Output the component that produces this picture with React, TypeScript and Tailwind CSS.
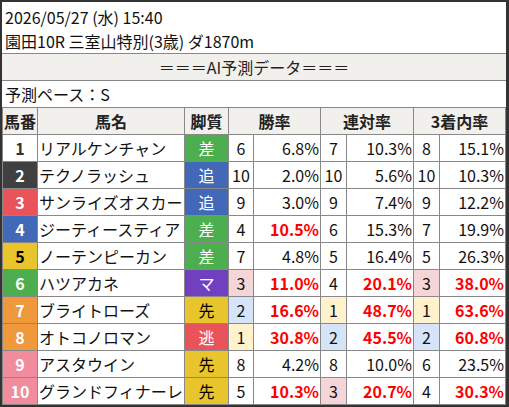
const font = { fontFamily: '"Noto Sans CJK JP", "Noto Sans", sans-serif' };

type Row = {
  no: number;
  name: string;
  style: string;
  win: [number, string];
  ren: [number, string];
  fuku: [number, string];
};

const rows: Row[] = [
  { no: 1, name: "リアルケンチャン", style: "差", win: [6, "6.8"], ren: [7, "10.3"], fuku: [8, "15.1"] },
  { no: 2, name: "テクノラッシュ", style: "追", win: [10, "2.0"], ren: [10, "5.6"], fuku: [10, "10.3"] },
  { no: 3, name: "サンライズオスカー", style: "追", win: [9, "3.0"], ren: [9, "7.4"], fuku: [9, "12.2"] },
  { no: 4, name: "ジーティースティア", style: "差", win: [4, "10.5"], ren: [6, "15.3"], fuku: [7, "19.9"] },
  { no: 5, name: "ノーテンピーカン", style: "差", win: [7, "4.8"], ren: [5, "16.4"], fuku: [5, "26.3"] },
  { no: 6, name: "ハツアカネ", style: "マ", win: [3, "11.0"], ren: [4, "20.1"], fuku: [3, "38.0"] },
  { no: 7, name: "ブライトローズ", style: "先", win: [2, "16.6"], ren: [1, "48.7"], fuku: [1, "63.6"] },
  { no: 8, name: "オトコノロマン", style: "逃", win: [1, "30.8"], ren: [2, "45.5"], fuku: [2, "60.8"] },
  { no: 9, name: "アスタウイン", style: "先", win: [8, "4.2"], ren: [8, "10.0"], fuku: [6, "23.5"] },
  { no: 10, name: "グランドフィナーレ", style: "先", win: [5, "10.3"], ren: [3, "20.7"], fuku: [4, "30.3"] },
];

const noColor: Record<number, string> = {
  1: "bg-white text-[#333]",
  2: "bg-[#404040] text-white",
  3: "bg-[#e9545b] text-white",
  4: "bg-[#4169b8] text-white",
  5: "bg-[#e8c52d] text-black",
  6: "bg-[#4cae4f] text-white",
  7: "bg-[#f0983c] text-white",
  8: "bg-[#f0983c] text-white",
  9: "bg-[#f08c9e] text-white",
  10: "bg-[#f08c9e] text-white",
};

const styleColor: Record<string, string> = {
  差: "bg-[#4cae4f] text-white",
  追: "bg-[#4169b8] text-white",
  マ: "bg-[#7040c0] text-white",
  先: "bg-[#e8c52d] text-black",
  逃: "bg-[#e9545b] text-white",
};

const rankBg: Record<number, string> = {
  1: "bg-[#fff2cc]",
  2: "bg-[#d6e4fa]",
  3: "bg-[#f5d5d8]",
};

const cell = "flex h-[26px] items-center text-[16px] leading-none";
const head = `${cell} justify-center bg-[#f2f0ec] font-bold text-[#222]`;

function Pair({ rank, pct, limit }: { rank: number; pct: string; limit: number }) {
  const hot = parseFloat(pct) >= limit;
  return (
    <>
      <div className={`${cell} justify-center text-[#111] ${rankBg[rank] ?? "bg-white"}`}>{rank}</div>
      <div className={`${cell} justify-end bg-white pr-[1px] ${hot ? "font-bold text-[#ff0000]" : "text-[#111]"}`}>
        {pct}%
      </div>
    </>
  );
}

export default function App() {
  return (
    <div style={font} className="h-[407px] w-[509px] bg-[#333] pb-[2px] pl-[2px] pr-[3px] pt-[2px]">
      <div className="h-full w-full bg-white">
        <div className="h-[51px] pl-[3px] pt-[3px] text-[16px] leading-6 text-[#111]">
          <div>2026/05/27 (水) 15:40</div>
          <div>園田10R 三室山特別(3歳) ダ1870m</div>
        </div>
        <div className="flex h-[28px] items-center justify-center border-y border-[#888] bg-[#f2f0ec] text-[16px] text-[#222]">
          ＝＝＝AI予測データ＝＝＝
        </div>
        <div className="flex h-[26px] items-center pl-[3px] text-[16px] text-[#111]">予測ペース：S</div>
        <div className="grid grid-cols-[34px_146px_43px_24px_66px_25px_66px_25px_65px] gap-px bg-[#888] p-px">
          <div className={head}>馬番</div>
          <div className={head}>馬名</div>
          <div className={head}>脚質</div>
          <div className={`${head} col-span-2`}>勝率</div>
          <div className={`${head} col-span-2`}>連対率</div>
          <div className={`${head} col-span-2`}>3着内率</div>
          {rows.map((r) => (
            <div key={r.no} className="contents">
              <div className={`${cell} justify-center font-bold ${noColor[r.no]}`}>{r.no}</div>
              <div className={`${cell} overflow-hidden whitespace-nowrap bg-white pl-[1px] text-[#111]`}>{r.name}</div>
              <div className={`${cell} justify-center ${styleColor[r.style]}`}>{r.style}</div>
              <Pair rank={r.win[0]} pct={r.win[1]} limit={10} />
              <Pair rank={r.ren[0]} pct={r.ren[1]} limit={20} />
              <Pair rank={r.fuku[0]} pct={r.fuku[1]} limit={30} />
            </div>
          ))}
        </div>
      </div>
    </div>
  );
}
